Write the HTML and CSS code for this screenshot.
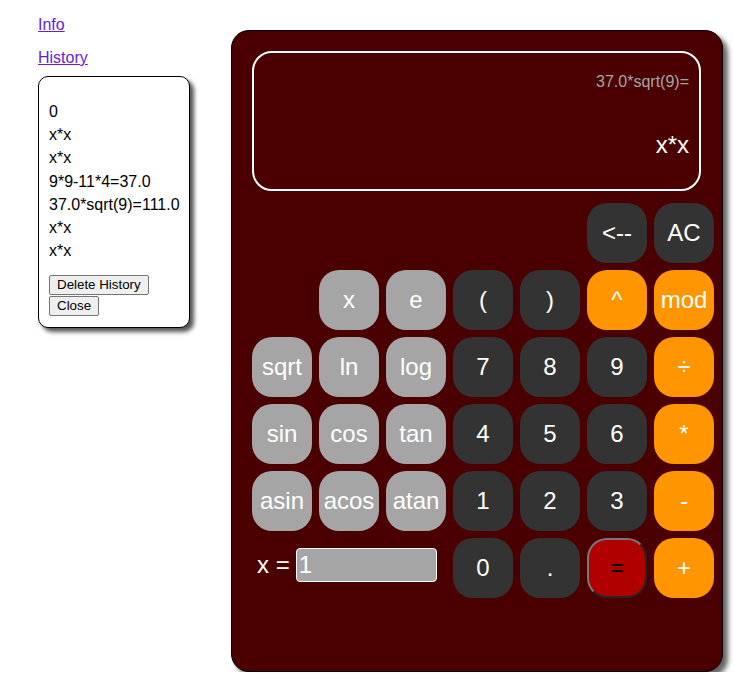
FILE: index.html
```html
<!DOCTYPE html>
<html>
<head>
<meta charset="utf-8">
<link rel="stylesheet" href="styles.css">
</head>
<body>
<div class="page">
  <div class="side">
    <a class="link" href="#">Info</a>
    <a class="link" href="#">History</a>
    <div class="history">
      <div class="entries">
        <div>0</div>
        <div>x*x</div>
        <div>x*x</div>
        <div>9*9-11*4=37.0</div>
        <div>37.0*sqrt(9)=111.0</div>
        <div>x*x</div>
        <div>x*x</div>
      </div>
      <div class="actions">
        <button class="small">Delete History</button>
        <button class="small">Close</button>
      </div>
    </div>
  </div>
  <div class="calc">
    <div class="display">
      <div class="prev">37.0*sqrt(9)=</div>
      <div class="cur">x*x</div>
    </div>
    <div class="keys">
      <span class="blank"></span><span class="blank"></span><span class="blank"></span><span class="blank"></span><span class="blank"></span>
      <button class="key dark">&lt;--</button>
      <button class="key dark">AC</button>

      <span class="blank"></span>
      <button class="key gray">x</button>
      <button class="key gray">e</button>
      <button class="key dark">(</button>
      <button class="key dark">)</button>
      <button class="key orange">^</button>
      <button class="key orange">mod</button>

      <button class="key gray">sqrt</button>
      <button class="key gray">ln</button>
      <button class="key gray">log</button>
      <button class="key dark">7</button>
      <button class="key dark">8</button>
      <button class="key dark">9</button>
      <button class="key orange">÷</button>

      <button class="key gray">sin</button>
      <button class="key gray">cos</button>
      <button class="key gray">tan</button>
      <button class="key dark">4</button>
      <button class="key dark">5</button>
      <button class="key dark">6</button>
      <button class="key orange">*</button>

      <button class="key gray">asin</button>
      <button class="key gray">acos</button>
      <button class="key gray">atan</button>
      <button class="key dark">1</button>
      <button class="key dark">2</button>
      <button class="key dark">3</button>
      <button class="key orange">-</button>

      <div class="xrow">
        <label class="xlabel">x =</label>
        <input class="xinput" type="text" value="1">
      </div>
      <button class="key dark">0</button>
      <button class="key dark">.</button>
      <button class="key equals">=</button>
      <button class="key orange">+</button>
    </div>
  </div>
</div>
</body>
</html>
```
FILE: styles.css
```css
html, body {
  margin: 0;
  padding: 0;
  background: #fff;
}
body {
  font-family: "Liberation Sans", Arial, sans-serif;
}
.page {
  display: flex;
  align-items: flex-start;
  padding: 0 0 0 38px;
}
.side {
  width: 152px;
  display: flex;
  flex-direction: column;
  align-items: flex-start;
  padding-top: 15px;
}
.link {
  font-size: 16px;
  color: #6a1be0;
  text-decoration: underline;
  line-height: 19px;
  margin-bottom: 14px;
}
.history {
  box-sizing: border-box;
  width: 152px;
  height: 252px;
  margin-top: -5px;
  border: 1px solid #000;
  border-radius: 10px;
  box-shadow: 4px 4px 4px #555;
  padding: 23px 10px 10px 10px;
  background: #fff;
}
.entries {
  font-size: 16px;
  line-height: 23.2px;
  color: #000;
  margin-bottom: 13px;
}
.actions {
  display: flex;
  flex-direction: column;
  align-items: flex-start;
  gap: 1px;
}
.small {
  box-sizing: border-box;
  font-family: "Liberation Sans", Arial, sans-serif;
  font-size: 13.33px;
  background: #efefef;
  border: 1px solid #767676;
  border-radius: 2px;
  padding: 1px 7px;
  height: 20px;
  line-height: 16px;
  color: #000;
  margin: 0;
}
.calc {
  box-sizing: border-box;
  margin-left: 41px;
  margin-top: 30px;
  width: 492px;
  height: 642px;
  background: #4a0000;
  border: 1px solid #000;
  border-radius: 18px;
  box-shadow: 5px 5px 5px #666;
  padding: 20px 7px 0 20px;
}
.display {
  box-sizing: border-box;
  width: 449px;
  height: 140px;
  border: 2px solid #fff;
  border-radius: 20px;
  padding: 19px 10px 0 10px;
  text-align: right;
}
.prev {
  font-size: 16px;
  color: #a5a5a5;
  line-height: 20px;
}
.cur {
  font-size: 24px;
  color: #fff;
  line-height: 28px;
  margin-top: 39px;
}
.keys {
  margin-top: 12px;
  display: grid;
  grid-template-columns: repeat(7, 60px);
  grid-auto-rows: 60px;
  gap: 7px;
}
.key {
  box-sizing: border-box;
  width: 60px;
  height: 60px;
  border: none;
  border-radius: 20px;
  font-family: "Liberation Sans", Arial, sans-serif;
  font-size: 24px;
  color: #fff;
  padding: 0;
  margin: 0;
}
.dark { background: #333333; }
.gray { background: #a5a5a5; }
.orange { background: #ff9500; }
.equals {
  background: #b00000;
  color: #000;
  border: 2px solid;
  border-color: #787878 #252525 #252525 #787878;
}
.xrow {
  grid-column: span 3;
  display: flex;
  align-items: center;
  padding-left: 5px;
  padding-bottom: 7px;
}
.xlabel {
  font-size: 24px;
  color: #fff;
  margin-right: 6px;
}
.xinput {
  box-sizing: border-box;
  width: 141px;
  height: 34px;
  background: #a5a5a5;
  border: 1px solid #fff;
  border-radius: 4px;
  font-family: "Liberation Sans", Arial, sans-serif;
  font-size: 24px;
  color: #fff;
  padding: 0 2px;
  margin: 0;
}
```
